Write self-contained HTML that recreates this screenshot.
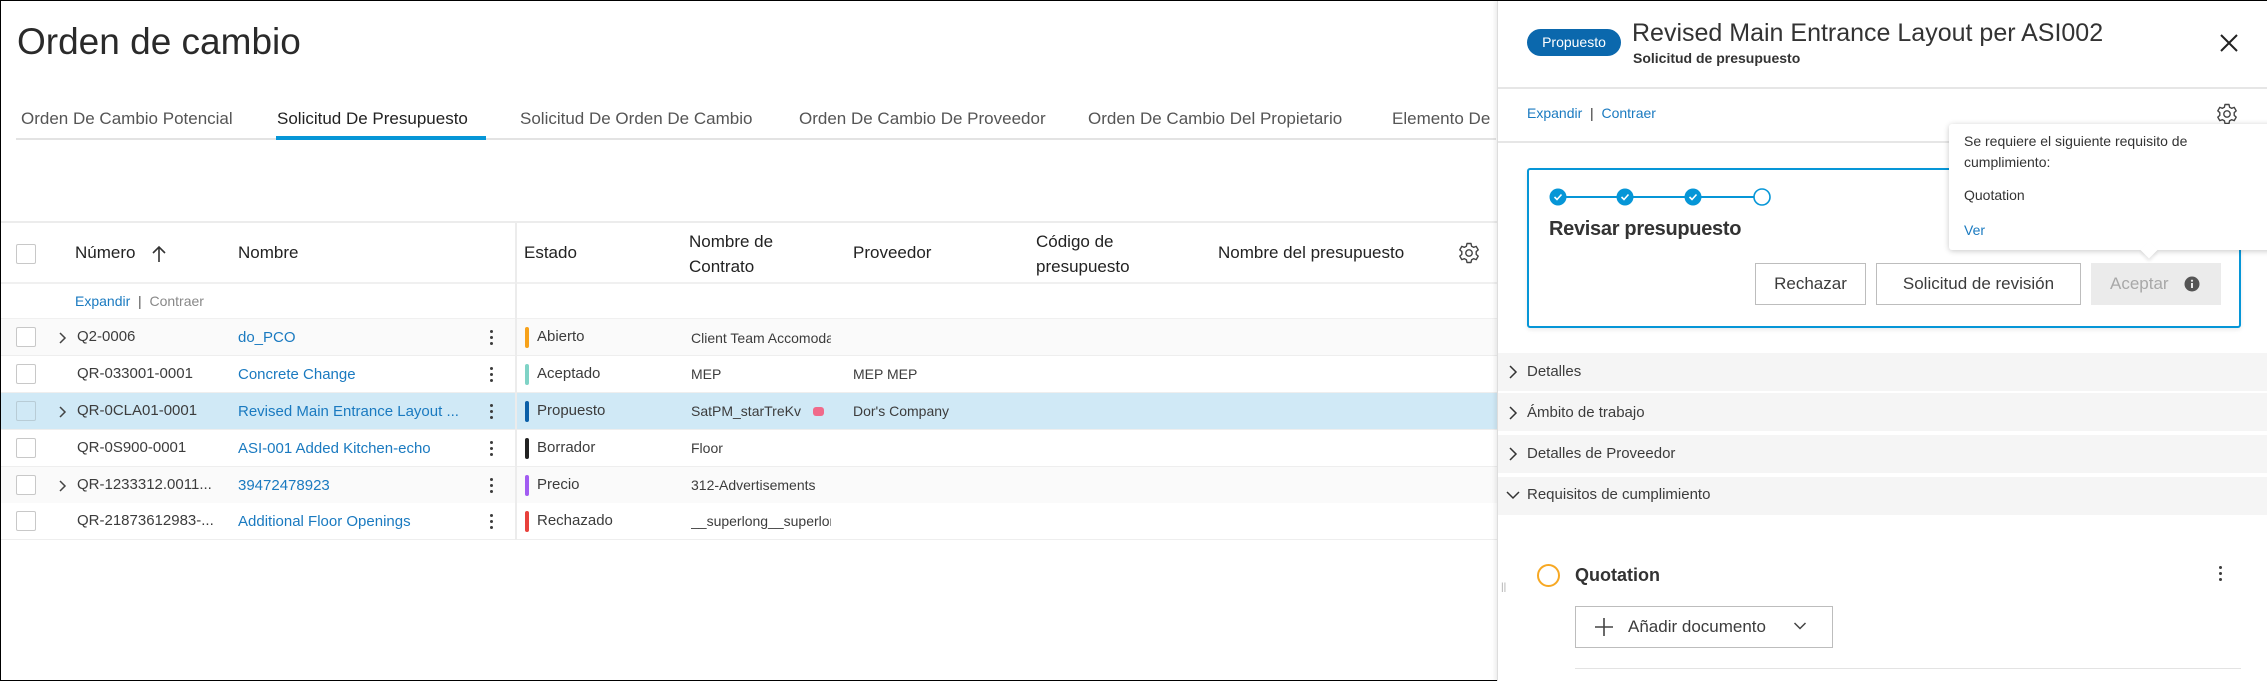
<!DOCTYPE html>
<html><head><meta charset="utf-8">
<style>
*{box-sizing:border-box;margin:0;padding:0}
html,body{width:2267px;height:681px;overflow:hidden;background:#fff}
body{position:relative;font-family:"Liberation Sans",sans-serif;color:#3c3c3c;border:1px solid #000}
.a{position:absolute;white-space:nowrap}
.t{line-height:20px}
.cb{position:absolute;width:20px;height:20px;border:1.5px solid #c8c8c8;border-radius:2px;background:#fff}
.lnk{color:#1a7ac0}
.row{position:absolute;left:0;width:1496px;height:37px;border-bottom:1px solid #eeeeee}
.sbar{position:absolute;width:4px;height:21px;border-radius:2px}
.keb{position:absolute;width:3px}
.keb i{display:block;width:3px;height:3px;border-radius:50%;background:#3c3c3c;margin-bottom:3px}
.acc{position:absolute;left:1497px;width:770px;height:38px;background:#f5f5f5}
.btn{position:absolute;border:1px solid #bdbdbd;background:#fff;font-size:17px;color:#3c3c3c;text-align:center;line-height:40px}
.chev{position:absolute;left:56px}
</style></head><body>

<div class="a" style="left:16px;top:18px;font-size:37px;line-height:46px;color:#2a2a2a">Orden de cambio</div>

<div class="a" style="left:15px;top:137px;width:1480px;height:2px;background:#e3e3e3"></div>
<div class="a" style="left:275px;top:135px;width:210px;height:4px;background:#0696d7"></div>
<div class="a t" style="left:20px;top:108px;font-size:17px;color:#555">Orden De Cambio Potencial</div>
<div class="a t" style="left:276px;top:108px;font-size:17px;color:#222">Solicitud De Presupuesto</div>
<div class="a t" style="left:519px;top:108px;font-size:17px;color:#555">Solicitud De Orden De Cambio</div>
<div class="a t" style="left:798px;top:108px;font-size:17px;color:#555">Orden De Cambio De Proveedor</div>
<div class="a t" style="left:1087px;top:108px;font-size:17px;color:#555">Orden De Cambio Del Propietario</div>
<div class="a t" style="left:1391px;top:108px;font-size:17px;color:#555">Elemento De</div>

<div class="a" style="left:0;top:220px;width:1496px;height:2px;background:#ececec"></div>
<div class="a" style="left:0;top:281px;width:1496px;height:2px;background:#f0f0f0"></div>
<div class="a" style="left:0;top:317px;width:1496px;height:2px;background:#f0f0f0"></div>
<div class="cb" style="left:15px;top:243px"></div>
<div class="a t" style="left:74px;top:242px;font-size:17px;color:#222">Número</div>
<svg class="a" style="left:150px;top:243px" width="16" height="20" viewBox="0 0 16 20"><path d="M8 18V3M2 9l6-6 6 6" fill="none" stroke="#333" stroke-width="1.6"/></svg>
<div class="a t" style="left:237px;top:242px;font-size:17px;color:#222">Nombre</div>
<div class="a t" style="left:523px;top:242px;font-size:17px;color:#222">Estado</div>
<div class="a" style="left:688px;top:228px;font-size:17px;line-height:25px;color:#222">Nombre de<br>Contrato</div>
<div class="a t" style="left:852px;top:242px;font-size:17px;color:#222">Proveedor</div>
<div class="a" style="left:1035px;top:228px;font-size:17px;line-height:25px;color:#222">Código de<br>presupuesto</div>
<div class="a t" style="left:1217px;top:242px;font-size:17px;color:#222">Nombre del presupuesto</div>
<svg class="a" style="left:1456px;top:240px" width="24" height="24" viewBox="0 0 24 24"><path d="M10 2.5h4l.6 2.7 2 1.1 2.6-.9 2 3.4-2 1.8v2.8l2 1.8-2 3.4-2.6-.9-2 1.1-.6 2.7h-4l-.6-2.7-2-1.1-2.6.9-2-3.4 2-1.8v-2.8l-2-1.8 2-3.4 2.6.9 2-1.1z" fill="none" stroke="#444" stroke-width="1.4" stroke-linejoin="round"/><circle cx="12" cy="12" r="3.2" fill="none" stroke="#444" stroke-width="1.4"/></svg>
<div class="a t" style="left:74px;top:290px;font-size:14px"><span class="lnk">Expandir</span> <span style="color:#555">&nbsp;|&nbsp;</span> <span style="color:#888">Contraer</span></div>

<div class="row" style="top:318px;background:#fafafa"></div>
<div class="row" style="top:355px;background:#fff"></div>
<div class="row" style="top:392px;background:#d0e9f6"></div>
<div class="row" style="top:429px;background:#fff"></div>
<div class="row" style="top:466px;background:#fafafa"></div>
<div class="row" style="top:502px;background:#fff"></div>
<div class="a" style="left:514px;top:221px;width:2px;height:318px;background:#ececec"></div>

<div class="cb" style="left:15px;top:326px"></div>
<svg class="chev" style="top:329px" width="10" height="16" viewBox="0 0 10 16"><path d="M3 3l5 5-5 5" fill="none" stroke="#444" stroke-width="1.5"/></svg>
<div class="a t" style="left:76px;top:326px;font-size:15px">Q2-0006</div>
<div class="a t lnk" style="left:237px;top:327px;font-size:15px">do_PCO</div>
<div class="keb" style="left:489px;top:329px"><i></i><i></i><i></i></div>
<div class="sbar" style="left:524px;top:326px;background:#f7a21b"></div>
<div class="a t" style="left:536px;top:326px;font-size:15px">Abierto</div>
<div class="a t" style="left:690px;top:327px;font-size:14px;width:140px;overflow:hidden">Client Team Accomodation</div>

<div class="cb" style="left:15px;top:363px"></div>
<div class="a t" style="left:76px;top:363px;font-size:15px">QR-033001-0001</div>
<div class="a t lnk" style="left:237px;top:364px;font-size:15px">Concrete Change</div>
<div class="keb" style="left:489px;top:366px"><i></i><i></i><i></i></div>
<div class="sbar" style="left:524px;top:363px;background:#7fd3c6"></div>
<div class="a t" style="left:536px;top:363px;font-size:15px">Aceptado</div>
<div class="a t" style="left:690px;top:363px;font-size:14px">MEP</div>
<div class="a t" style="left:852px;top:363px;font-size:14px">MEP MEP</div>

<div class="cb" style="left:15px;top:400px;background:#d0e9f6;border-color:#b8ccd6"></div>
<svg class="chev" style="top:403px" width="10" height="16" viewBox="0 0 10 16"><path d="M3 3l5 5-5 5" fill="none" stroke="#444" stroke-width="1.5"/></svg>
<div class="a t" style="left:76px;top:400px;font-size:15px">QR-0CLA01-0001</div>
<div class="a t lnk" style="left:237px;top:401px;font-size:15px">Revised Main Entrance Layout ...</div>
<div class="keb" style="left:489px;top:403px"><i></i><i></i><i></i></div>
<div class="sbar" style="left:524px;top:400px;background:#0a5fa8"></div>
<div class="a t" style="left:536px;top:400px;font-size:15px">Propuesto</div>
<div class="a t" style="left:690px;top:400px;font-size:14px">SatPM_starTreKv</div>
<div class="a" style="left:812px;top:406px;width:11px;height:9px;background:#f06a8a;border-radius:3px"></div>
<div class="a t" style="left:852px;top:400px;font-size:14px">Dor's Company</div>

<div class="cb" style="left:15px;top:437px"></div>
<div class="a t" style="left:76px;top:437px;font-size:15px">QR-0S900-0001</div>
<div class="a t lnk" style="left:237px;top:438px;font-size:15px">ASI-001 Added Kitchen-echo</div>
<div class="keb" style="left:489px;top:440px"><i></i><i></i><i></i></div>
<div class="sbar" style="left:524px;top:437px;background:#222"></div>
<div class="a t" style="left:536px;top:437px;font-size:15px">Borrador</div>
<div class="a t" style="left:690px;top:437px;font-size:14px">Floor</div>

<div class="cb" style="left:15px;top:474px"></div>
<svg class="chev" style="top:477px" width="10" height="16" viewBox="0 0 10 16"><path d="M3 3l5 5-5 5" fill="none" stroke="#444" stroke-width="1.5"/></svg>
<div class="a t" style="left:76px;top:474px;font-size:15px">QR-1233312.0011...</div>
<div class="a t lnk" style="left:237px;top:475px;font-size:15px">39472478923</div>
<div class="keb" style="left:489px;top:477px"><i></i><i></i><i></i></div>
<div class="sbar" style="left:524px;top:474px;background:#a25cf2"></div>
<div class="a t" style="left:536px;top:474px;font-size:15px">Precio</div>
<div class="a t" style="left:690px;top:474px;font-size:14px;width:140px;overflow:hidden">312-Advertisements</div>

<div class="cb" style="left:15px;top:510px"></div>
<div class="a t" style="left:76px;top:510px;font-size:15px">QR-21873612983-...</div>
<div class="a t lnk" style="left:237px;top:511px;font-size:15px">Additional Floor Openings</div>
<div class="keb" style="left:489px;top:513px"><i></i><i></i><i></i></div>
<div class="sbar" style="left:524px;top:510px;background:#e8413c"></div>
<div class="a t" style="left:536px;top:510px;font-size:15px">Rechazado</div>
<div class="a t" style="left:690px;top:510px;font-size:14px;width:140px;overflow:hidden">__superlong__superlong</div>

<div class="a" style="left:1496px;top:0;width:771px;height:681px;background:#fff;border-left:1px solid #ddd;box-shadow:-2px 0 4px rgba(0,0,0,0.08)"></div>
<div class="a" style="left:1526px;top:28px;width:94px;height:27px;border-radius:14px;background:#0b68ad;color:#fff;font-size:14px;line-height:27px;text-align:center">Propuesto</div>
<div class="a" style="left:1631px;top:16px;font-size:25px;line-height:32px;color:#333">Revised Main Entrance Layout per ASI002</div>
<div class="a" style="left:1632px;top:48px;font-size:14px;line-height:18px;font-weight:bold;color:#333">Solicitud de presupuesto</div>
<svg class="a" style="left:2218px;top:32px" width="20" height="20" viewBox="0 0 20 20"><path d="M2 2l16 16M18 2L2 18" stroke="#222" stroke-width="2"/></svg>
<div class="a" style="left:1497px;top:86px;width:770px;height:2px;background:#e6e6e6"></div>
<div class="a t" style="left:1526px;top:102px;font-size:14px"><span class="lnk">Expandir</span> <span style="color:#333">&nbsp;|&nbsp;</span> <span class="lnk">Contraer</span></div>
<svg class="a" style="left:2214px;top:101px" width="24" height="24" viewBox="0 0 24 24"><path d="M10 2.5h4l.6 2.7 2 1.1 2.6-.9 2 3.4-2 1.8v2.8l2 1.8-2 3.4-2.6-.9-2 1.1-.6 2.7h-4l-.6-2.7-2-1.1-2.6.9-2-3.4 2-1.8v-2.8l-2-1.8 2-3.4 2.6.9 2-1.1z" fill="none" stroke="#444" stroke-width="1.4" stroke-linejoin="round"/><circle cx="12" cy="12" r="3.2" fill="none" stroke="#444" stroke-width="1.4"/></svg>
<div class="a" style="left:1497px;top:140px;width:770px;height:2px;background:#e6e6e6"></div>

<div class="a" style="left:1526px;top:167px;width:714px;height:160px;border:2px solid #0696d7;border-radius:3px;box-shadow:0 2px 4px rgba(0,0,0,0.08)"></div>
<div class="a" style="left:1557px;top:195px;width:204px;height:2px;background:#0696d7"></div>
<svg class="a" style="left:1547px;top:186px" width="224" height="20" viewBox="0 0 224 20">
<circle cx="10" cy="10" r="8.5" fill="#0696d7"/><path d="M6.5 10l2.5 2.5 4.5-5" fill="none" stroke="#fff" stroke-width="1.6"/>
<circle cx="77" cy="10" r="8.5" fill="#0696d7"/><path d="M73.5 10l2.5 2.5 4.5-5" fill="none" stroke="#fff" stroke-width="1.6"/>
<circle cx="145" cy="10" r="8.5" fill="#0696d7"/><path d="M141.5 10l2.5 2.5 4.5-5" fill="none" stroke="#fff" stroke-width="1.6"/>
<circle cx="214" cy="10" r="8" fill="#fff" stroke="#0696d7" stroke-width="1.6"/>
</svg>
<div class="a" style="left:1548px;top:215px;font-size:20px;line-height:26px;color:#333;font-weight:bold;letter-spacing:-0.3px">Revisar presupuesto</div>
<div class="btn" style="left:1754px;top:262px;width:111px;height:42px">Rechazar</div>
<div class="btn" style="left:1875px;top:262px;width:205px;height:42px">Solicitud de revisión</div>
<div class="btn" style="left:2090px;top:262px;width:130px;height:42px;background:#ebebeb;border-color:#ebebeb;color:#a8a8a8;text-align:left;padding-left:18px">Aceptar</div>
<svg class="a" style="left:2183px;top:275px" width="16" height="16" viewBox="0 0 16 16"><circle cx="8" cy="8" r="7.5" fill="#555"/><rect x="7" y="7" width="2" height="5" fill="#ebebeb"/><circle cx="8" cy="4.7" r="1.1" fill="#ebebeb"/></svg>

<div class="a" style="left:1948px;top:123px;width:330px;height:126px;background:#fff;border-radius:3px;box-shadow:0 1px 6px rgba(0,0,0,0.22)"></div>
<div class="a" style="left:2142px;top:243px;width:12px;height:12px;background:#fff;transform:rotate(45deg);box-shadow:2px 2px 3px rgba(0,0,0,0.1)"></div>
<div class="a" style="left:1963px;top:130px;font-size:14px;line-height:21px;color:#333">Se requiere el siguiente requisito de<br>cumplimiento:</div>
<div class="a t" style="left:1963px;top:184px;font-size:14px;color:#333">Quotation</div>
<div class="a t lnk" style="left:1963px;top:219px;font-size:14px">Ver</div>

<div class="acc" style="top:352px"></div>
<div class="acc" style="top:392px"></div>
<div class="acc" style="top:434px"></div>
<div class="acc" style="top:476px"></div>
<svg class="a" style="left:1507px;top:363px" width="10" height="16" viewBox="0 0 10 16"><path d="M2 2l6 6-6 6" fill="none" stroke="#333" stroke-width="1.5"/></svg>
<svg class="a" style="left:1507px;top:404px" width="10" height="16" viewBox="0 0 10 16"><path d="M2 2l6 6-6 6" fill="none" stroke="#333" stroke-width="1.5"/></svg>
<svg class="a" style="left:1507px;top:445px" width="10" height="16" viewBox="0 0 10 16"><path d="M2 2l6 6-6 6" fill="none" stroke="#333" stroke-width="1.5"/></svg>
<svg class="a" style="left:1504px;top:488px" width="16" height="12" viewBox="0 0 16 12"><path d="M2 3l6 6 6-6" fill="none" stroke="#333" stroke-width="1.5"/></svg>
<div class="a t" style="left:1526px;top:361px;font-size:15px">Detalles</div>
<div class="a t" style="left:1526px;top:402px;font-size:15px">Ámbito de trabajo</div>
<div class="a t" style="left:1526px;top:443px;font-size:15px">Detalles de Proveedor</div>
<div class="a t" style="left:1526px;top:484px;font-size:15px">Requisitos de cumplimiento</div>

<div class="a" style="left:1500px;top:581px;font-size:10px;color:#aaa;line-height:12px">||</div>
<div class="a" style="left:1536px;top:563px;width:23px;height:23px;border:2px solid #f7a823;border-radius:50%"></div>
<div class="a" style="left:1574px;top:562px;font-size:18px;line-height:24px;color:#333;font-weight:bold">Quotation</div>
<div class="keb" style="left:2218px;top:565px"><i></i><i></i><i></i></div>
<div class="btn" style="left:1574px;top:605px;width:258px;height:42px;text-align:left;padding-left:52px;font-size:17px">Añadir documento</div>
<svg class="a" style="left:1592px;top:615px" width="22" height="22" viewBox="0 0 22 22"><path d="M11 2v18M2 11h18" stroke="#444" stroke-width="1.6"/></svg>
<svg class="a" style="left:1792px;top:620px" width="14" height="10" viewBox="0 0 14 10"><path d="M1.5 2l5.5 5.5 5.5-5.5" fill="none" stroke="#444" stroke-width="1.5"/></svg>
<div class="a" style="left:1574px;top:667px;width:666px;height:1px;background:#e3e3e3"></div>

</body></html>
